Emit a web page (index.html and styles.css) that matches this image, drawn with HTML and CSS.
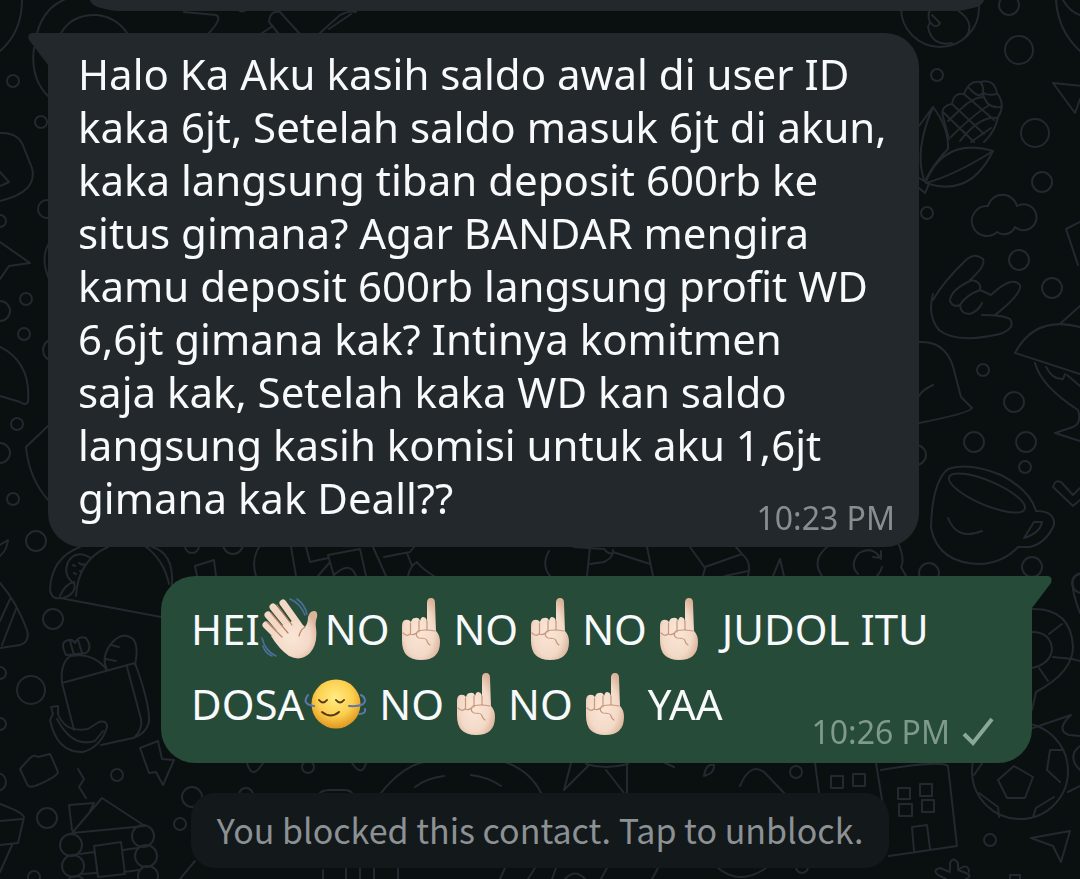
FILE: index.html
```html
<!DOCTYPE html>
<html lang="id">
<head>
<meta charset="utf-8">
<meta name="viewport" content="width=device-width, initial-scale=1">
<title>Chat</title>
<link rel="stylesheet" href="styles.css">
</head>
<body>
<svg class="wallpaper" viewBox="0 0 1080 879" preserveAspectRatio="xMidYMid slice" aria-hidden="true">
  <!-- bubbles -->
  <g>
    <circle cx="13" cy="81" r="6"/><circle cx="41" cy="122" r="6"/><circle cx="47" cy="209" r="9"/><circle cx="0" cy="221" r="6"/>
    <circle cx="26" cy="299" r="6"/><circle cx="24" cy="334" r="6"/><circle cx="0" cy="311" r="10"/><circle cx="17" cy="424" r="6"/>
    <circle cx="0" cy="453" r="10"/><circle cx="13" cy="499" r="6"/><circle cx="36" cy="541" r="10"/><circle cx="53" cy="619" r="10"/>
    <circle cx="31" cy="690" r="14"/><circle cx="0" cy="673" r="6"/><circle cx="0" cy="724" r="6"/><circle cx="117" cy="775" r="6"/>
    <circle cx="-3" cy="782" r="9"/><circle cx="47" cy="818" r="10"/><circle cx="192" cy="797" r="10"/><circle cx="180" cy="824" r="6"/>
    <circle cx="34" cy="877" r="6"/><circle cx="308" cy="767" r="6"/><circle cx="246" cy="795" r="7"/>
    <circle cx="1009" cy="5" r="10"/><circle cx="1019" cy="50" r="14"/><circle cx="937" cy="75" r="6"/><circle cx="1035" cy="133" r="14"/>
    <circle cx="1042" cy="182" r="10"/><circle cx="927" cy="213" r="6"/><circle cx="1019" cy="260" r="10"/><circle cx="1052" cy="288" r="10"/>
    <circle cx="983" cy="370" r="6"/><circle cx="1014" cy="402" r="10"/><circle cx="974" cy="442" r="10"/><circle cx="1026" cy="442" r="10"/>
    <circle cx="1025" cy="467" r="6"/><circle cx="1032" cy="567" r="10"/><circle cx="929" cy="573" r="10"/><circle cx="796" cy="772" r="6"/>
    <circle cx="990" cy="840" r="6"/><circle cx="802" cy="867" r="6"/><circle cx="916" cy="455" r="10"/><circle cx="192" cy="546" r="7"/>
    <circle cx="1082" cy="583" r="10"/><circle cx="54" cy="350" r="11"/><circle cx="233" cy="544" r="10"/>
  </g>
  <!-- left edge -->
  <path d="M22 0Q22 32 0 51M37 33Q45 4 72-3M61 33Q72 14 97 15Q116 17 127 33M34 48Q30 78 48 96M184 12L216 15Q223 18 209 33M262 33L273 26M269 22Q270 10 280 12L299 33M269 22L278 33M320 33L340 15Q350 10 356 12M329 29L351 14M238 10Q242 13 246 10"/>
  <path d="M0 133Q19 132 24 148L32 168Q38 192 0 201M0 172L9 182L0 186M0 242L30 263L9 266L0 279M49 243Q40 258 49 279M0 347Q31 362 28 402Q26 406 20 402L0 396M49 425L26 447Q29 479 49 501M0 545L8 540Q7 550 0 556"/>
  <!-- taco -->
  <path d="M80 547Q51 558 50 590Q52 600 60 598L161 617M76 596Q78 560 108 547M145 546Q164 560 169 584M152 547Q174 553 172 585M91 558Q76 549 68 562Q63 574 72 582M60 596Q65 584 74 582Q77 594 63 598M73 565l2 1M79 563l2 1M74 573l2 1M80 571l2 1M82 565l2-1"/>
  <!-- pizza slice -->
  <path d="M0 583Q16 601 27 630Q30 642 20 645L0 648M0 621L10 599M2 645L16 609"/>
  <!-- lunch bag -->
  <path d="M66 655Q60 643 66 641Q72 638 75 643Q79 635 86 638Q93 648 86 653ZM70 641L74 655M78 640L82 653M70 656Q60 664 62 683L74 730M62 683L135 663Q150 704 149 722Q146 734 133 738L101 745M71 656Q93 652 107 670M107 670Q101 658 110 645Q122 630 133 639Q139 646 135 665M106 659L116 661M111 645L119 647M127 667L141 719Q143 729 134 738"/>
  <path d="M51 707L58 706L58 714Q65 733 88 729L99 722Q107 720 107 727Q101 747 83 752Q57 753 50 720L53 714ZM57 719Q72 748 95 741L103 731"/>
  <!-- toy brick, steam, bolt -->
  <path d="M20 769L30 758Q34 754 38 757L50 754Q53 760 58 772Q57 777 35 786Q28 788 27 784ZM78 769L84 779L79 787L86 798M140 748L158 741L162 759L174 760L163 785L156 772L149 773Z"/>
  <!-- log cabin -->
  <path d="M72 833L102 798L145 826ZM72 830L69 805L94 803L90 811M80 854L94 852M82 874L96 873M94 846L121 842L125 874L98 877ZM123 850L137 848M124 872L139 870"/>
  <circle cx="71" cy="845" r="11"/><circle cx="143" cy="836" r="11"/><circle cx="73" cy="866" r="11"/><circle cx="146" cy="856" r="11"/><circle cx="148" cy="876" r="10"/><circle cx="76" cy="886" r="10"/>
  <path d="M0 804Q22 812 24 817L18 843L0 845M0 821L22 819M12 845L0 872M180 879L195 861"/>
  <!-- globe -->
  <circle cx="940" cy="8" r="39"/><path d="M930 10Q927 16 930 22L928 27Q932 47 952 43M930 22Q936 30 940 23L932 15M957 10Q976 22 966 37M1056 0Q1058 31 1080 51M1063 0Q1070 12 1080 15"/>
  <!-- corn -->
  <path d="M919 126L933 107Q949 128 948 149Q935 162 926 179M933 107Q914 150 924 180M926 181Q945 137 993 151Q970 198 926 183Q955 175 993 151M919 178L929 184L925 193L919 188"/>
  <path d="M943 117Q940 106 952 104Q954 92 964 94Q969 80 980 82Q994 78 997 93Q1006 105 998 117Q995 132 984 142M943 117L949 139M943 112L974 142M952 104L984 134M964 94L994 120M969 88Q980 100 983 92Q984 86 980 82M983 94Q987 109 1000 107M997 94Q986 96 983 92M983 97Q972 98 962 108L948 121M988 106Q974 114 951 137M998 118Q980 115 960 141M991 128L971 142"/>
  <!-- cloud -->
  <path d="M988 206A15 15 0 1 0 997 232A12 12 0 0 0 1015 227A13 13 0 1 0 1017 206A15 15 0 0 0 988 206Z"/>
  <!-- hand -->
  <path d="M933 300Q943 282 966 260Q975 252 983 259Q986 266 970 280Q982 281 980 290L991 295Q1012 275 1020 285Q1022 294 995 315M933 294Q927 316 939 330Q956 344 1000 334Q1016 328 1010 319Q1003 315 982 315M972 280Q950 290 950 301Q953 308 960 305Q966 295 980 290M960 305Q960 313 969 314Q978 312 982 303"/>
  <path d="M1053 83L1082 86M1053 83L1075 113L1080 99M1066 229L1080 222M1066 229L1078 265"/>
  <!-- bell -->
  <path d="M919 342Q948 340 955 374L961 397L972 408Q970 413 919 423M919 396Q922 390 933 385"/>
  <!-- umbrella -->
  <path d="M1015 353Q1035 315 1080 327M1061 323L1080 306M1015 353L1080 374M1035 363Q1041 386 1078 410Q1082 423 1073 427L1055 433L1080 441M1046 367Q1053 380 1063 379L1065 374M1067 375L1080 386"/>
  <!-- cup -->
  <path d="M948 469Q932 482 931 528Q938 564 982 564Q1004 562 1018 547L1030 547Q1046 543 1054 525Q1055 511 1036 511Q1030 490 1001 475Q969 462 948 469ZM948 518Q957 541 982 531M1034 522L1042 522Q1040 533 1024 538Z"/>
  <ellipse cx="987" cy="493" rx="41" ry="12" transform="rotate(23 987 493)"/>
  <path d="M1053 487Q1055 479 1061 482L1073 495L1080 488M1053 487L1073 506L1080 500M881 559Q873 545 859 553Q849 565 858 574M882 567Q881 572 877 576M881 551L881 558L873 557M899 545Q905 560 901 567L906 576"/>
  <!-- between the messages -->
  <path d="M197 576L195 566L214 560L216 576M259 547Q251 560 256 576M291 547L296 576M306 547L310 562L328 558M334 576L328 555L360 549L366 576M318 576L330 562M334 575Q350 560 356 576M373 547L386 576M384 557L410 552L414 547M407 553L412 566M408 576Q410 566 417 562Q422 569 434 576M549 551Q541 565 550 576M590 547L587 576M590 564L604 562Q614 557 613 550M574 547L604 549Q610 556 613 552L650 564M647 547L653 576M690 547L705 568L703 576M705 567L742 554Q752 562 748 576M725 576L748 571M736 547L742 554M773 576L780 559L784 576M827 547Q811 560 822 576"/>
  <!-- life ring -->
  <path d="M1032 609Q1071 608 1073 647Q1073 672 1036 692L1032 710M1032 632Q1051 632 1052 650Q1050 664 1032 668M1049 634L1062 624M1053 657L1072 659M1039 668L1048 681M1072 659L1080 661M1080 613Q1071 590 1073 580Q1075 575 1080 574M1030 729L1071 715Q1055 730 1069 735L1080 736"/>
  <!-- football -->
  <circle cx="1020" cy="771" r="48"/><path d="M1014 766L998 780L1007 798H1025L1033 777ZM1063 750H1050L1047 770L1060 782M974 775L983 762M979 793L998 807L999 817M1054 797L1036 808L1033 817M1068 792L1080 786M1080 746Q1070 753 1075 764L1080 770M1031 838L1070 831L1061 862L1053 846Z"/>
  <!-- buildings -->
  <path d="M815 763L820 800M876 763L883 806M881 770Q940 760 948 766L957 846L889 856M914 851L912 827L927 825L930 849M831 776H843V788H831ZM853 774H865V786H853ZM898 788H910V799H898ZM920 784H932V796H920ZM899 804H912V816H899ZM922 800H934V812H922ZM740 786Q750 762 764 772L786 795"/>
  <!-- flower -->
  <path d="M950 870V863Q953 856 958 863V870L966 873Q973 876 966 879M950 872L940 868Q932 870 938 875L946 879M958 870Q968 862 969 872M1010 879V875H1020V879"/>
  <!-- bottom strip -->
  <path d="M247 763Q252 781 263 763M352 763Q362 778 366 763M381 793Q405 763 430 761M502 761Q530 770 541 793M415 787Q427 778 444 776M471 775Q488 777 501 786M564 790L571 763M564 790L588 766M586 764Q605 770 628 764M606 770L624 793M627 763V793M665 763L674 767M704 776Q706 763 714 765Q715 773 704 776M320 793Q323 790 330 790H344Q350 790 352 793M323 870V879M346 879V868M360 868V879M374 868V879M398 868V879M505 868L500 879M535 868L528 879M552 879L556 868M565 879Q575 868 585 879M607 868L601 879M658 868L652 879M718 868Q740 886 766 868"/>
</svg>

<svg class="sprites" aria-hidden="true">
  <defs>
    <radialGradient id="skin" cx="45%" cy="55%" r="60%">
      <stop offset="0" stop-color="#fbe6d6"/><stop offset=".65" stop-color="#f3dac8"/><stop offset="1" stop-color="#dbb39a"/>
    </radialGradient>
    <radialGradient id="face" cx="48%" cy="38%" r="60%">
      <stop offset="0" stop-color="#ffec83"/><stop offset=".6" stop-color="#fdd04f"/><stop offset="1" stop-color="#e39b22"/>
    </radialGradient>
  </defs>
  <symbol id="point-up" viewBox="0 0 40 64">
    <path fill="url(#skin)" d="M26 6Q26 1 30 1T34 6L35 34Q39 38 39 45Q39 63 20 63Q1 63 1 44V29Q1 24 4 23Q8 22 10 25Q11 21 14 21Q18 20 19 24Q20 20 22 20Q26 20 26 26Z"/>
    <path fill="none" stroke="#c9977b" stroke-width="1.2" stroke-linecap="round" d="M9.500 26V37M18 24V35M26 24V33M2 36Q6 40 9 37Q14 39 17 34M16 36Q14 39 18 41Q26 41 26 44Q27 47 29 48M17 34Q24 32 34 34"/>
  </symbol>
  <symbol id="wave" viewBox="0 0 58 64">
    <g fill="none" stroke="#4a6f9c" stroke-width="1.600" stroke-linecap="round">
      <path d="M29 2Q39 6 44 18M36 2Q44 8 46 17M1 41Q4 54 15 59M2 49Q4 56 11 59"/>
    </g>
    <g fill="none" stroke="#f2d8c5" stroke-width="7" stroke-linecap="round">
      <path d="M22 6L37 27M12 10L32 35M7 18L25 39M5 28L22 45"/>
    </g>
    <path fill="url(#skin)" d="M22 28L36 22L44 30Q47 26 47 20Q49 13 54 14Q57 15 56 20Q54 25 55 31Q57 47 49 56Q40 65 28 59Q18 52 10 39Z"/>
    <path fill="none" stroke="#bd8465" stroke-width="1.200" stroke-linecap="round" d="M16 8L31 28M10 16L27 36M6 25L21 40M44 30Q40 32 38 39"/>
  </symbol>
  <symbol id="shake" viewBox="0 0 64 52">
    <circle cx="32" cy="26" r="24.500" fill="url(#face)"/>
    <g fill="none" stroke-linecap="round">
      <path stroke="#583719" stroke-width="2" d="M15 22Q19 27 23 22M32 22Q36 27 40 22M18 34Q27 41 35 34"/>
      <path stroke="#5b77ad" stroke-width="2" d="M4 17Q-3 26 10 28M45 28Q60 29 61 23Q61 19 57 17M55 36Q62 36 61 31"/>
    </g>
  </symbol>
</svg>

<main class="chat">
  <div class="bubble bubble-previous"></div>

  <article class="bubble bubble-in">
    <svg class="tail tail-in" viewBox="0 0 24 32" aria-hidden="true"><path d="M24 0H4Q-1 1 1 7L20 32H24Z"/></svg>
    <p class="text">Halo Ka Aku kasih saldo awal di user ID<br>kaka 6jt, Setelah saldo masuk 6jt di akun,<br>kaka langsung tiban deposit 600rb ke<br>situs gimana? Agar BANDAR mengira<br>kamu deposit 600rb langsung profit WD<br>6,6jt gimana kak? Intinya komitmen<br>saja kak, Setelah kaka WD kan saldo<br>langsung kasih komisi untuk aku 1,6jt<br>gimana kak Deall??</p>
    <footer class="meta"><time datetime="22:23">10:23 PM</time></footer>
  </article>

  <article class="bubble bubble-out">
    <svg class="tail tail-out" viewBox="0 0 24 32" aria-hidden="true"><path d="M0 0H20Q25 1 23 7L4 32H0Z"/></svg>
    <p class="text">HEI<svg class="emoji wave" role="img" aria-label="👋🏻"><use href="#wave"/></svg>NO<svg class="emoji point" role="img" aria-label="☝🏻"><use href="#point-up"/></svg>NO<svg class="emoji point" role="img" aria-label="☝🏻"><use href="#point-up"/></svg>NO<svg class="emoji point" role="img" aria-label="☝🏻"><use href="#point-up"/></svg> JUDOL ITU<br>DOSA<svg class="emoji shake" role="img" aria-label="🙂‍↔️"><use href="#shake"/></svg> NO<svg class="emoji point" role="img" aria-label="☝🏻"><use href="#point-up"/></svg>NO<svg class="emoji point" role="img" aria-label="☝🏻"><use href="#point-up"/></svg> YAA</p>
    <footer class="meta"><time datetime="22:26">10:26 PM</time><svg class="tick" viewBox="0 0 32 30" role="img" aria-label="Sent"><path d="M2 17L11 26L30 2"/></svg></footer>
  </article>

  <button class="notice" type="button">You blocked this contact. Tap to unblock.</button>
</main>
</body>
</html>
```
FILE: styles.css
```css
* {
  box-sizing: border-box;
}

body {
  margin: 0;
  min-height: 100vh;
  background: #0a0f10;
  font-family: "Noto Sans", "Open Sans", sans-serif;
  overflow: hidden;
}

.wallpaper {
  position: fixed;
  inset: 0;
  width: 100%;
  height: 100%;
  fill: none;
  stroke: #23292e;
  stroke-width: 2;
  stroke-linecap: round;
  stroke-linejoin: round;
}

.sprites {
  position: absolute;
  width: 0;
  height: 0;
}

.chat {
  position: relative;
  display: flex;
  flex-direction: column;
  padding: 0 48px 11px;
}

.bubble {
  position: relative;
  display: grid;
  border-radius: 34px;
}

.bubble > .text,
.bubble > .meta {
  grid-area: 1 / 1;
}

.bubble-previous {
  height: 11px;
  margin: 0 48px 22px 42px;
  border-radius: 0 0 34px 34px / 0 0 11px 11px;
  background: #23282c;
}

.bubble-in {
  margin: 0 113px 29px 0;
  padding: 14px 24px 9px 30px;
  border-top-left-radius: 0;
  background: #23282c;
}

.bubble-out {
  margin: 0 0 30px 113px;
  padding: 15px 38px 11px 30px;
  border-top-right-radius: 0;
  background: #264b39;
}

.tail {
  position: absolute;
  top: 0;
  width: 24px;
  height: 32px;
}

.tail-in {
  left: -20px;
  fill: #23282c;
}

.tail-out {
  right: -20px;
  fill: #264b39;
}

.text {
  margin: 0;
  padding-bottom: 14px;
  color: #f7f9fb;
  font-size: 42px;
  line-height: 53px;
  white-space: nowrap;
}

.bubble-out .text {
  padding-bottom: 11px;
  line-height: 75px;
}

.meta {
  display: flex;
  align-items: center;
  align-self: end;
  justify-self: end;
  gap: 12px;
  color: #898d90;
  font-size: 32px;
  line-height: 40px;
}

.bubble-out .meta {
  color: #7f9a8c;
}

.tick {
  width: 32px;
  height: 30px;
  fill: none;
  stroke: #8aa898;
  stroke-width: 4;
}

.emoji {
  vertical-align: -16px;
}

.wave {
  width: 58px;
  height: 64px;
  margin: 0 6px 0 1px;
}

.point {
  width: 40px;
  height: 64px;
  margin: 0 12px;
}

.shake {
  width: 64px;
  height: 52px;
  vertical-align: -10px;
}

.notice {
  align-self: center;
  padding: 12px 26px 13px;
  border: 0;
  border-radius: 24px;
  background: #13181b;
  color: #8c9194;
  font-family: "Noto Sans CJK SC", sans-serif;
  font-size: 34px;
  line-height: 50px;
}
```
